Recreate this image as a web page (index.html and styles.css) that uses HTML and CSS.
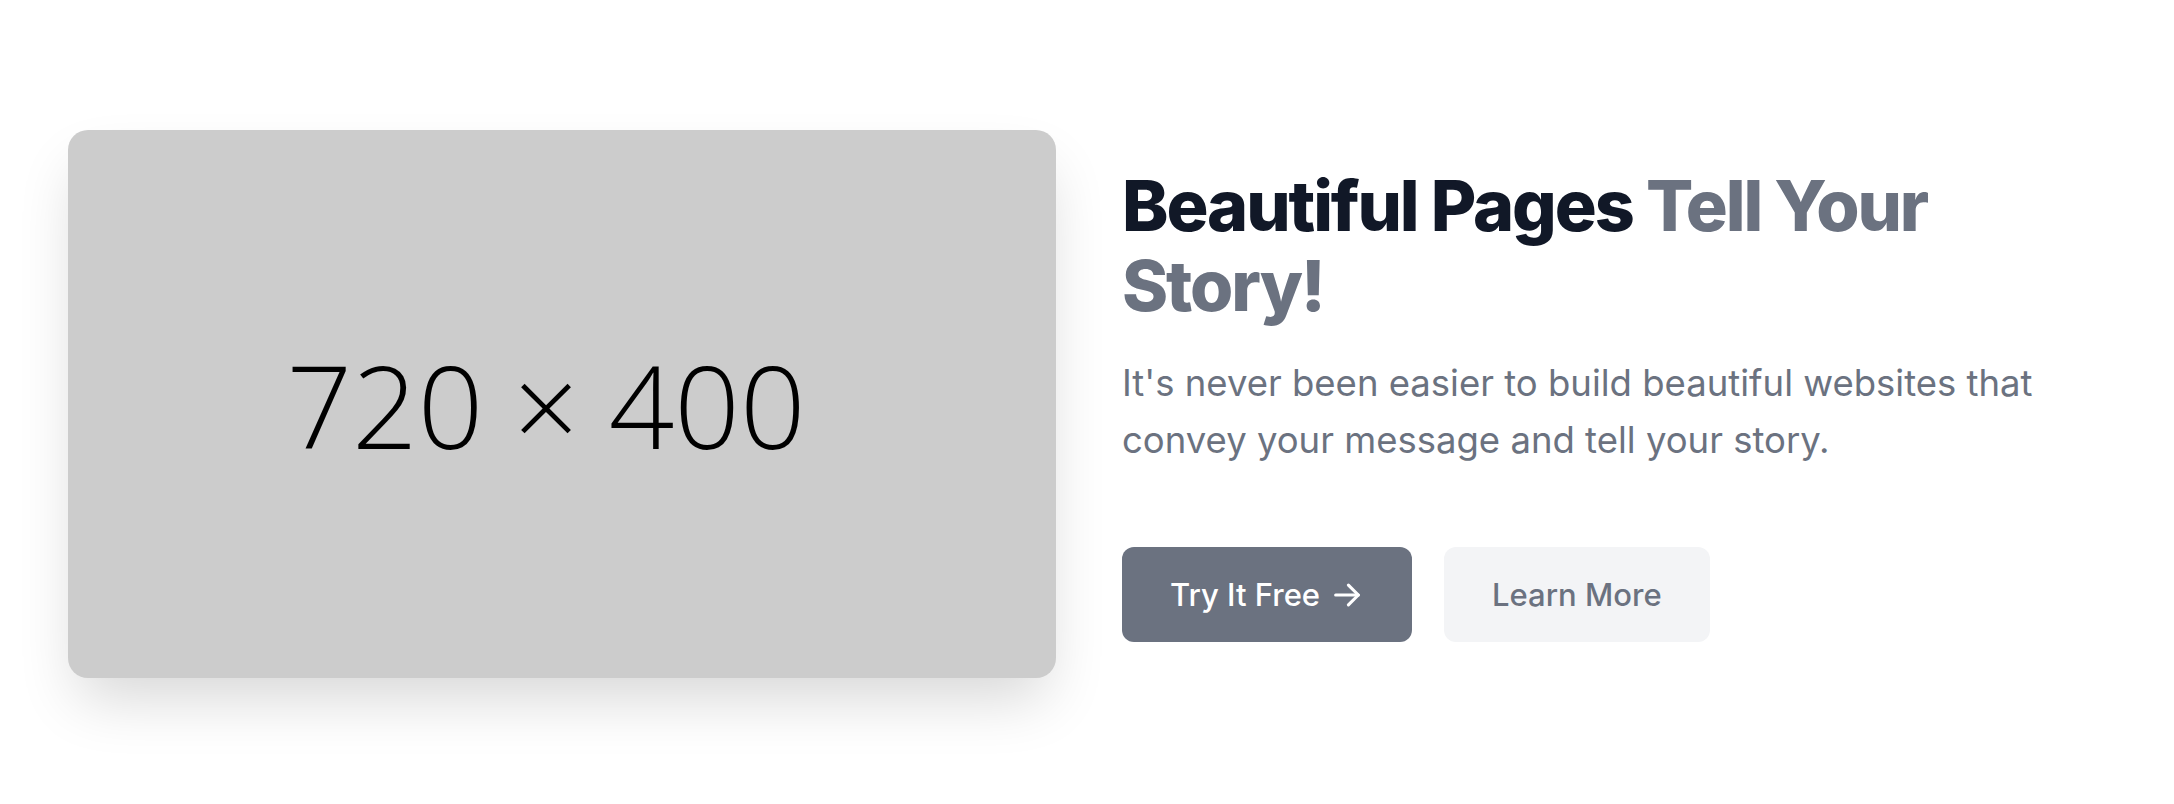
FILE: index.html
```html
<!DOCTYPE html>
<html lang="en">
<head>
<meta charset="utf-8">
<title>Beautiful Pages</title>
<link rel="stylesheet" href="styles.css">
</head>
<body>
<section class="hero">
  <div class="media">
    <span class="media-label">720 × 400</span>
  </div>
  <div class="content">
    <h1 class="title">Beautiful Pages <span class="title-muted">Tell Your Story!</span></h1>
    <p class="lead">It's never been easier to build beautiful websites that convey your message and tell your story.</p>
    <div class="actions">
      <a class="btn btn-primary" href="#">Try It Free
        <svg class="btn-icon" viewBox="0 0 24 24" fill="none" stroke="currentColor" stroke-width="2.2" stroke-linecap="round" stroke-linejoin="round"><path d="M4 12h16"/><path d="M13 5l7 7-7 7"/></svg>
      </a>
      <a class="btn btn-secondary" href="#">Learn More</a>
    </div>
  </div>
</section>
</body>
</html>
```

FILE: styles.css
```css
* { box-sizing: border-box; }
html, body { margin: 0; padding: 0; background: #ffffff; }
body { font-family: Inter, "Liberation Sans", sans-serif; min-height: 100vh; }

.hero {
  display: flex;
  align-items: center;
  gap: 66px;
  padding: 130px 68px 126px 68px;
}

.media {
  flex: 0 0 988px;
  height: 548px;
  background: #cccccc;
  border-radius: 20px;
  box-shadow: 0 30px 60px -10px rgba(0, 0, 0, 0.16);
  display: flex;
  align-items: center;
  justify-content: center;
  padding-right: 32px;
}

.media-label {
  font-family: "Open Sans", sans-serif;
  font-weight: 300;
  font-size: 115px;
  color: #000000;
  line-height: 1;
}

.content { flex: 1; min-width: 0; }

.title {
  margin: 0;
  font-size: 70px;
  line-height: 80px;
  font-weight: 800;
  letter-spacing: -0.03em;
  color: #111827;
}
.title-muted { color: #6b7280; }

.lead {
  margin: 29px 0 0 0;
  font-size: 36.5px;
  line-height: 57px;
  color: #6b7280;
}

.actions {
  display: flex;
  gap: 32px;
  margin-top: 78px;
}

.btn {
  display: inline-flex;
  align-items: center;
  gap: 10px;
  height: 95px;
  padding: 0 48px;
  border-radius: 12px;
  font-size: 31px;
  font-weight: 500;
  text-decoration: none;
}
.btn-primary { background: #6b7280; color: #ffffff; }
.btn-secondary { background: #f3f4f6; color: #6b7280; }
.btn-icon { width: 34px; height: 34px; }
```
